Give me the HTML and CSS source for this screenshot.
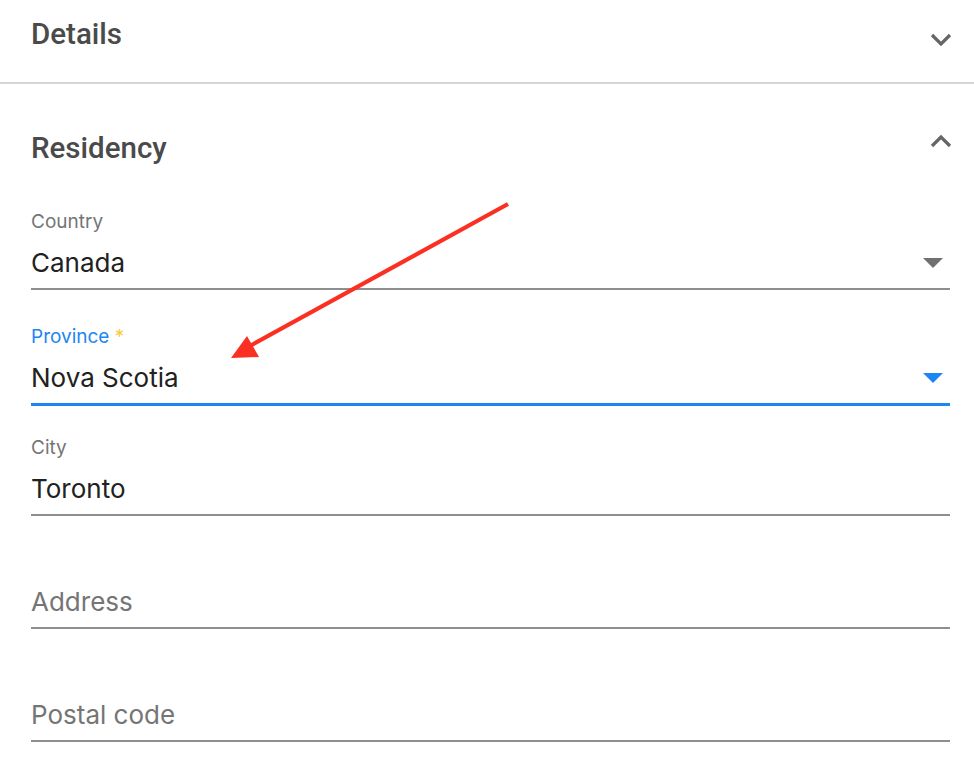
FILE: index.html
```html
<!DOCTYPE html>
<html lang="en">
<head>
    <meta charset="UTF-8">
    <meta name="viewport" content="width=device-width, initial-scale=1.0">
    <title>Residency</title>
    <link rel="stylesheet" href="styles.css">
</head>
<body>

    <div class="panel collapsed">
        <div class="panel-head">
            <h2>Details</h2>
            <svg class="chevron" width="22" height="14" viewBox="0 0 22 14">
                <polyline points="2,2 11,11 20,2" fill="none" stroke="#666" stroke-width="3.2"/>
            </svg>
        </div>
    </div>

    <div class="panel open">
        <div class="panel-head">
            <h2>Residency</h2>
            <svg class="chevron up" width="22" height="14" viewBox="0 0 22 14">
                <polyline points="2,12 11,3 20,12" fill="none" stroke="#666" stroke-width="3.2"/>
            </svg>
        </div>

        <div class="field">
            <div class="field-label">Country</div>
            <div class="field-control">
                <span class="value">Canada</span>
                <span class="caret"></span>
            </div>
        </div>

        <div class="field focused">
            <div class="field-label">Province <span class="required">*</span></div>
            <div class="field-control">
                <span class="value">Nova Scotia</span>
                <span class="caret"></span>
            </div>
        </div>

        <div class="field">
            <div class="field-label">City</div>
            <div class="field-control">
                <input type="text" value="Toronto">
            </div>
        </div>

        <div class="field">
            <div class="field-label"></div>
            <div class="field-control">
                <input type="text" placeholder="Address">
            </div>
        </div>

        <div class="field">
            <div class="field-label"></div>
            <div class="field-control">
                <input type="text" placeholder="Postal code">
            </div>
        </div>
    </div>

    <!-- annotation arrow -->
    <svg class="annotation" width="974" height="778" viewBox="0 0 974 778">
        <line x1="508" y1="204" x2="248" y2="347" stroke="#fb2f22" stroke-width="4.2"/>
        <polygon points="231,358 247,336 259,357" fill="#fb2f22"/>
    </svg>

</body>
</html>
```

FILE: styles.css
```css
body {
    font-family: Inter, Roboto, "Liberation Sans", sans-serif;
    margin: 0;
    background-color: #fff;
    color: #212121;
}


.panel-head {
    display: flex;
    justify-content: space-between;
    align-items: center;
    padding: 0 22px 0 31px;
}

.panel-head h2 {
    margin: 0;
    font-family: Roboto, "Liberation Sans", sans-serif;
    font-size: 29.5px;
    font-weight: 500;
    line-height: 34px;
    color: #4a4a4a;
}

.collapsed {
    border-bottom: 2px solid #d6d6d6;
}

.collapsed .panel-head {
    padding-top: 17px;
    padding-bottom: 31px;
}

.collapsed .chevron {
    margin-top: 11px;
}

.open {
    padding: 47px 24px 0 31px;
}

.open .panel-head {
    padding: 0;
    margin-right: -2px;
}

.open .chevron {
    margin-top: -14px;
}


.field {
    margin-top: 34px;
}

.open .panel-head + .field {
    margin-top: 46px;
}

.field-label {
    height: 22px;
    line-height: 22px;
    font-size: 19px;
    color: #757575;
    margin-bottom: 12px;
}

.field-control {
    display: flex;
    align-items: center;
    justify-content: space-between;
    height: 36px;
    padding-bottom: 7px;
    border-bottom: 2px solid #8e8e8e;
}

.value,
.field-control input {
    font-family: inherit;
    font-size: 26px;
    line-height: 36px;
    color: #212121;
}

.field-control input {
    border: none;
    outline: none;
    padding: 0;
    margin: 0;
    width: 100%;
    background: transparent;
}

.field-control input::placeholder {
    color: #757575;
    opacity: 1;
}

.caret {
    width: 0;
    height: 0;
    margin-right: 7px;
    border-left: 10px solid transparent;
    border-right: 10px solid transparent;
    border-top: 10px solid #707070;
}


.focused {
    padding-top: 2px;
    margin-bottom: -2px;
}

.focused .field-label {
    color: #1c86f2;
}

.focused .required {
    color: #f9c93a;
}

.focused .field-control {
    border-bottom-color: #1c86f2;
    box-shadow: 0 1px 0 #1c86f2;
}

.focused .caret {
    border-top-color: #1c86f2;
}


.annotation {
    position: absolute;
    top: 0;
    left: 0;
    pointer-events: none;
}
```
